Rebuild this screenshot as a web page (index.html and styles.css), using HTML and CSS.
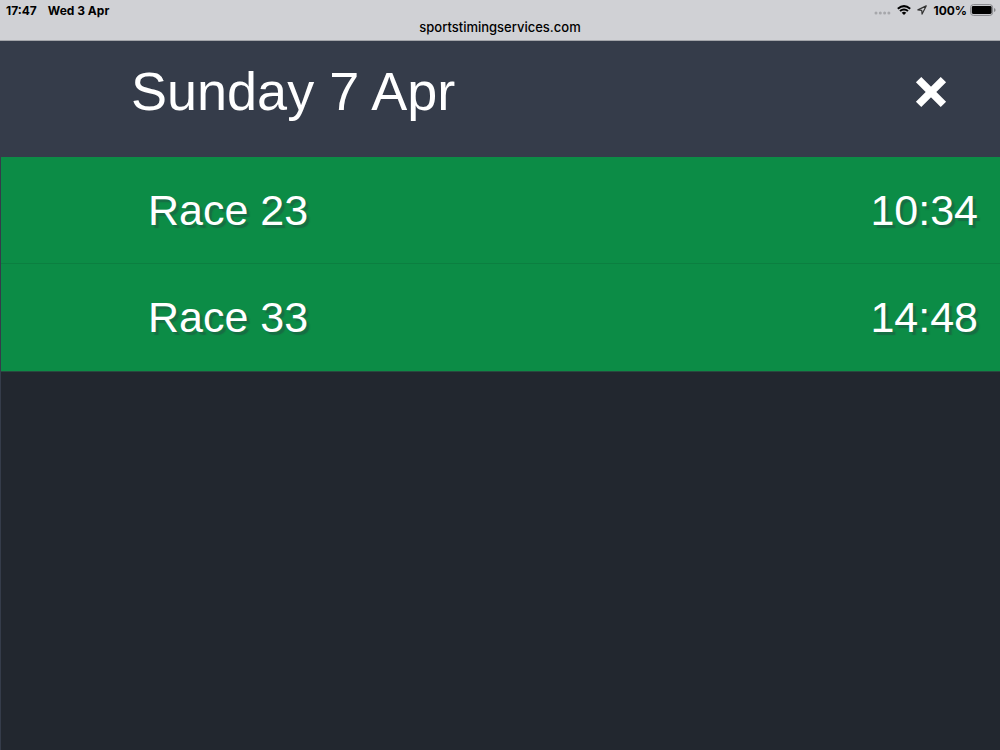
FILE: index.html
```html
<!DOCTYPE html>
<html lang="en">
<head>
<meta charset="utf-8">
<meta name="viewport" content="width=device-width, initial-scale=1">
<title>Sunday 7 Apr</title>
<link rel="stylesheet" href="styles.css">
</head>
<body>
<div class="browser-bar">
  <div class="status">
    <div class="status-group status-left"><span>17:47</span><span>Wed 3 Apr</span></div>
    <div class="status-group status-right">
      <svg class="signal" viewBox="0 0 17 4" aria-hidden="true"><circle cx="2" cy="2" r="1.5"/><circle cx="6.3" cy="2" r="1.5"/><circle cx="10.6" cy="2" r="1.5"/><circle cx="14.9" cy="2" r="1.5"/></svg>
      <svg class="wifi" viewBox="0 0 14 10" aria-hidden="true"><path d="M.8 3.7Q7-1.5 13.2 3.7M3 6.1Q7 2.8 11 6.1" fill="none" stroke="#000" stroke-width="2"/><path d="M4.7 7.7Q7 5.8 9.3 7.7L7 10z" fill="#000"/></svg>
      <svg class="location" viewBox="0 0 10 10" aria-hidden="true"><path d="M9.2.9.9 4.9l3.8.4.4 3.8z" fill="none" stroke="#333" stroke-width="1.2" stroke-linejoin="round"/></svg>
      <span>100%</span>
      <svg class="battery" viewBox="0 0 26 12" aria-hidden="true"><rect x=".6" y=".6" width="22" height="10.8" rx="2.8" fill="none" stroke="#85868a"/><rect x="1.8" y="2" width="19.8" height="8" rx="1.4"/><path d="M24 4q1.6.4 1.6 2T24 8z" fill="#85868a"/></svg>
    </div>
  </div>
  <div class="address">sportstimingservices.com</div>
</div>
<main class="page">
  <header class="day-header">
    <h1 class="day-title">Sunday 7 Apr</h1>
    <button class="close" type="button" aria-label="Close">
      <svg class="close-icon" viewBox="0 0 32 32" aria-hidden="true"><path d="M3.6 3.6 28.4 28.4M28.4 3.6 3.6 28.4" stroke="#fff" stroke-width="7.6"/></svg>
    </button>
  </header>
  <ul class="races">
    <li class="race"><span>Race 23</span><time>10:34</time></li>
    <li class="race"><span>Race 33</span><time>14:48</time></li>
  </ul>
</main>
</body>
</html>
```
FILE: styles.css
```css
* {
  box-sizing: border-box;
}

body {
  display: flex;
  flex-direction: column;
  min-height: 100vh;
  margin: 0;
  background: #22272f;
  color: #fff;
  font-family: "Liberation Sans", Arial, sans-serif;
}

.browser-bar {
  padding-bottom: 6px;
  border-bottom: 1px solid #a3a5aa;
  background: #d0d1d5;
  color: #000;
  font-family: Inter, sans-serif;
}

.status {
  display: flex;
  justify-content: space-between;
  height: 20px;
  padding: 0 4px 0 6px;
  font-size: 12px;
  font-weight: 700;
}

.status-group {
  display: flex;
  align-items: center;
}

.status-left {
  gap: 11px;
}

.status-right {
  gap: 6px;
}

.signal {
  width: 17px;
  height: 4px;
  margin-top: 6px;
  fill: #a6a7ab;
}

.wifi {
  width: 14px;
  height: 10px;
}

.location {
  width: 10px;
  height: 10px;
}

.battery {
  width: 26px;
  height: 12px;
  margin-left: -3px;
}

.address {
  font-size: 13px;
  font-weight: 500;
  line-height: 14px;
  text-align: center;
}

.page {
  flex: 1;
  border-left: 1px solid #353c4a;
}

.day-header {
  display: flex;
  align-items: flex-start;
  justify-content: space-between;
  padding: 18px 53px 34px 130px;
  background: #353c4a;
}

.day-title {
  margin: 0;
  font-size: 54px;
  font-weight: 400;
  line-height: 64px;
}

.close {
  display: flex;
  padding: 0;
  margin-top: 17px;
  border: 0;
  background: none;
  cursor: pointer;
}

.close-icon {
  width: 32px;
  height: 32px;
}

.races {
  margin: 0;
  padding: 0;
  list-style: none;
}

.race {
  display: flex;
  justify-content: space-between;
  padding: 28px 22px 27px 147px;
  border-bottom: 1px solid #0b7f40;
  background: #0c8c46;
  font-size: 43px;
  line-height: 51px;
  text-shadow: 3px 3px 1px rgba(40, 65, 65, 0.4);
}

.race:last-child {
  padding-bottom: 28px;
  border-bottom-color: #29483f;
}
```
